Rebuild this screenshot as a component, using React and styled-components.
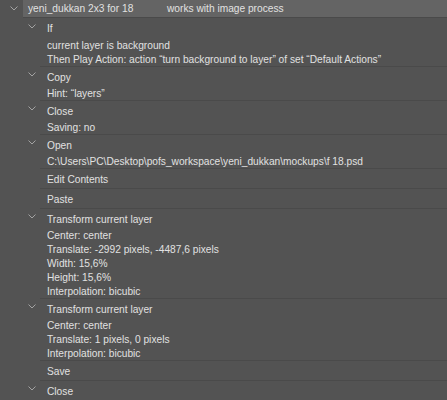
import React from "react";
import styled, { createGlobalStyle } from "styled-components";

const Global = createGlobalStyle`
  html, body { margin: 0; padding: 0; background: #535353; }
  body { font-family: "Liberation Sans", Arial, sans-serif; }
`;

const Panel = styled.div`
  width: 447px;
  height: 400px;
  overflow: hidden;
  background: #535353;
  color: #e1e1e1;
  font-size: 10.2px;
  line-height: 14px;
  display: flex;
  flex-direction: column;
`;

const Header = styled.div`
  display: flex;
  height: 18px;
  flex-shrink: 0;
`;

const HeaderToggle = styled.div`
  width: 23px;
  display: flex;
  align-items: flex-start;
  padding: 6px 0 0 10px;
  box-sizing: border-box;
`;

const HeaderBar = styled.div`
  flex: 1;
  background: #646464;
  border-bottom: 1px solid #4a4a4a;
  display: flex;
  align-items: center;
  padding: 1px 0 0 5px;
`;

const SetName = styled.span`
  width: 139px;
  white-space: nowrap;
`;

const Step = styled.div`
  display: flex;
  flex-direction: column;
  flex-shrink: 0;
  &::before {
    content: "";
    display: ${(p) => (p.$first ? "none" : "block")};
    height: 1px;
    margin-left: 40px;
    background: #4a4a4a;
  }
`;

const Title = styled.div`
  display: flex;
  align-items: center;
  box-sizing: border-box;
  height: ${(p) => (p.$first ? 20 : 19)}px;
  padding: 2px 0 0 28px;
  gap: 11px;
  white-space: nowrap;
`;

const ToggleSlot = styled.span`
  width: 8px;
  height: 5px;
  display: flex;
  align-self: flex-start;
  margin-top: ${(p) => (p.$first ? 4 : 3)}px;
`;

const Detail = styled.div`
  box-sizing: border-box;
  height: 14px;
  padding: 1px 0 0 47px;
  white-space: nowrap;
`;

const Chevron = () => (
  <svg width="8" height="5" viewBox="0 0 8 5">
    <polyline points="0.5,0.5 4,4 7.5,0.5" fill="none" stroke="#a3a3a3" strokeWidth="1" />
  </svg>
);

const steps = [
  {
    title: "If",
    open: true,
    lines: [
      "current layer is background",
      "Then Play Action: action \u201cturn background to layer\u201d of set \u201cDefault Actions\u201d",
    ],
  },
  { title: "Copy", open: true, lines: ["Hint:  \u201clayers\u201d"] },
  { title: "Close", open: true, lines: ["Saving: no"] },
  {
    title: "Open",
    open: true,
    lines: ["C:\\Users\\PC\\Desktop\\pofs_workspace\\yeni_dukkan\\mockups\\f 18.psd"],
  },
  { title: "Edit Contents", open: false, lines: [] },
  { title: "Paste", open: false, lines: [] },
  {
    title: "Transform current layer",
    open: true,
    lines: [
      "Center: center",
      "Translate: -2992 pixels, -4487,6 pixels",
      "Width: 15,6%",
      "Height: 15,6%",
      "Interpolation: bicubic",
    ],
  },
  {
    title: "Transform current layer",
    open: true,
    lines: ["Center: center", "Translate: 1 pixels, 0 pixels", "Interpolation: bicubic"],
  },
  { title: "Save", open: false, lines: [] },
  { title: "Close", open: true, lines: [] },
];

export default function App() {
  return (
    <>
      <Global />
      <Panel>
        <Header>
          <HeaderToggle>
            <Chevron />
          </HeaderToggle>
          <HeaderBar>
            <SetName>yeni_dukkan 2x3 for 18</SetName>
            <span>works with image process</span>
          </HeaderBar>
        </Header>
        {steps.map((s, i) => (
          <Step key={i} $first={i === 0}>
            <Title $first={i === 0}>
              <ToggleSlot $first={i === 0}>{s.open && <Chevron />}</ToggleSlot>
              <span>{s.title}</span>
            </Title>
            {s.lines.map((l, j) => (
              <Detail key={j}>{l}</Detail>
            ))}
          </Step>
        ))}
      </Panel>
    </>
  );
}
